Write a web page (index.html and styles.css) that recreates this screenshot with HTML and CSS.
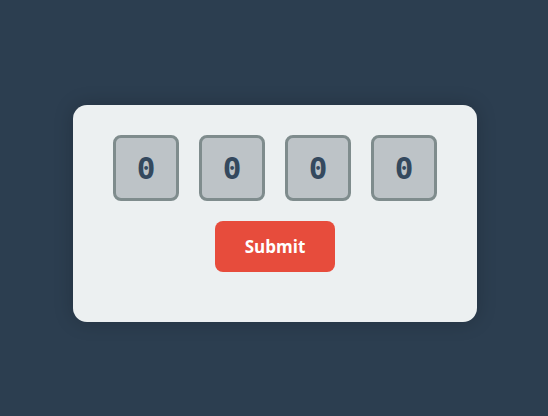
FILE: index.html
```html
<!DOCTYPE html>
<html>
<head>
<meta charset="utf-8">
<link rel="stylesheet" href="styles.css">
</head>
<body>
<div class="card">
  <div class="digits">
    <div class="digit">0</div>
    <div class="digit">0</div>
    <div class="digit">0</div>
    <div class="digit">0</div>
  </div>
  <button class="submit">Submit</button>
</div>
</body>
</html>
```
FILE: styles.css
```css
html, body {
  margin: 0;
  height: 100%;
}
body {
  background: #2c3e50;
  display: flex;
  align-items: center;
  justify-content: center;
  padding: 11px 0 0 2px;
  box-sizing: border-box;
}
.card {
  width: 404px;
  height: 217px;
  box-sizing: border-box;
  background: #ecf0f1;
  border-radius: 14px;
  padding: 30px 40px 50px;
  display: flex;
  flex-direction: column;
  align-items: center;
  gap: 20px;
  box-shadow: 0 0 20px rgba(0, 0, 0, 0.2);
}
.digits {
  display: flex;
  gap: 20px;
}
.digit {
  width: 66px;
  height: 66px;
  box-sizing: border-box;
  border: 3px solid #7f8c8d;
  border-radius: 8px;
  background: #bdc3c7;
  color: #34495e;
  font-family: "DejaVu Sans Mono", monospace;
  font-weight: bold;
  font-size: 31px;
  display: flex;
  align-items: center;
  justify-content: center;
}
.submit {
  width: 120px;
  height: 51px;
  border: none;
  border-radius: 8px;
  background: #e74c3c;
  color: #ffffff;
  font-family: "Open Sans", sans-serif;
  font-weight: bold;
  font-size: 17px;
  padding: 0;
}
```
